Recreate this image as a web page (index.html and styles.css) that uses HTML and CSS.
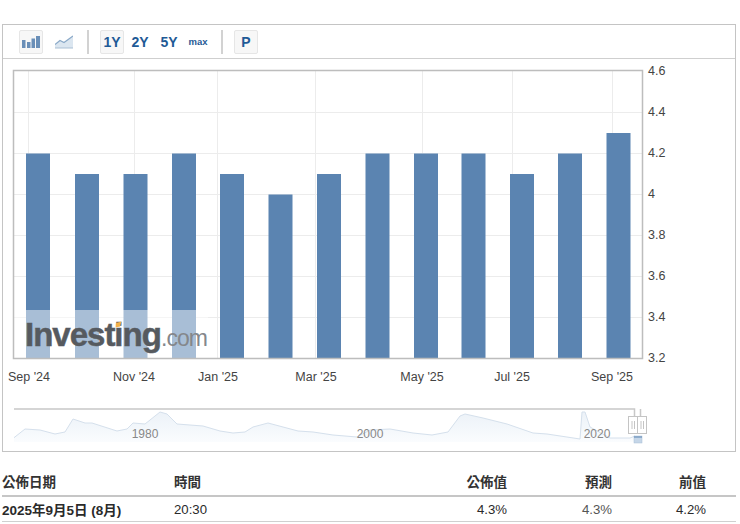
FILE: index.html
```html
<!DOCTYPE html>
<html lang="zh-Hant">
<head>
<meta charset="utf-8">
<title>Investing chart</title>
<link rel="stylesheet" href="styles.css">
</head>
<body>
<section class="panel">
  <div class="toolbar">
    <button class="tool active icon-tool" type="button">
      <svg width="18" height="13" viewBox="0 0 18 13"><path class="bar-icon" d="M0 5h3.500v8H0zM5 7h3.500v6H5zM9.500 3.500H13V13H9.500zM14 1h4v12h-4z"/></svg>
    </button>
    <button class="tool icon-tool" type="button">
      <svg width="18" height="14" viewBox="0 0 18 14"><path class="line-fill" d="M0 9.500 5 5.500 9 7.500 18 1v12H0z"/><path class="line-stroke" d="M0 9.500 5 5.500 9 7.500 18 1"/><path class="line-base" d="M0 13h18"/></svg>
    </button>
    <span class="sep sep-a"></span>
    <button class="tool active" type="button">1Y</button>
    <button class="tool gap-a" type="button">2Y</button>
    <button class="tool gap-b" type="button">5Y</button>
    <button class="tool small gap-c" type="button">max</button>
    <span class="sep sep-b"></span>
    <button class="tool active" type="button">P</button>
  </div>
  <svg class="chart" width="732" height="392" viewBox="3 59 732 392">
    <defs>
      <linearGradient id="nav" x1="0" y1="0" x2="0" y2="1">
        <stop offset="0" stop-color="#ecf2f8"/>
        <stop offset="1" stop-color="#fafcfe"/>
      </linearGradient>
    </defs>
    <g class="grid">
      <path d="M14 112.500H642M14 153.500H642M14 194.500H642M14 235.500H642M14 276.500H642M14 317.500H642"/>
      <path d="M28.500 71V358M134.500 71V358M217.500 71V358M315.500 71V358M422.500 71V358M512.500 71V358M612.500 71V358"/>
    </g>
    <g class="bars">
      <rect x="26" y="153.500" width="24" height="204.500"/>
      <rect x="75" y="174" width="24" height="184"/>
      <rect x="123.500" y="174" width="24" height="184"/>
      <rect x="172" y="153.500" width="24" height="204.500"/>
      <rect x="220" y="174" width="24" height="184"/>
      <rect x="268.500" y="194.500" width="24" height="163.500"/>
      <rect x="317" y="174" width="24" height="184"/>
      <rect x="365.500" y="153.500" width="24" height="204.500"/>
      <rect x="414" y="153.500" width="24" height="204.500"/>
      <rect x="461.500" y="153.500" width="24" height="204.500"/>
      <rect x="510" y="174" width="24" height="184"/>
      <rect x="558" y="153.500" width="24" height="204.500"/>
      <rect x="606.500" y="133" width="24" height="225"/>
    </g>
    <rect class="veil" x="14" y="310" width="194" height="48"/>
    <path class="frame" d="M13.500 358.500V70.500H642.500V358.500Z"/>
    <g class="wm">
      <text class="wm-main" x="25" y="346">Investing</text>
      <text class="wm-com" x="161" y="346">.com</text>
      <path class="wm-dot" d="M116 323l5.500-1.500-1.500 5-4.500 1z"/>
    </g>
    <g class="y-axis">
      <text x="648" y="75">4.6</text>
      <text x="648" y="116">4.4</text>
      <text x="648" y="157">4.2</text>
      <text x="648" y="198">4</text>
      <text x="648" y="239">3.8</text>
      <text x="648" y="280">3.6</text>
      <text x="648" y="321">3.4</text>
      <text x="648" y="362">3.2</text>
    </g>
    <g class="x-axis">
      <text x="29" y="381">Sep '24</text>
      <text x="134" y="381">Nov '24</text>
      <text x="218" y="381">Jan '25</text>
      <text x="316" y="381">Mar '25</text>
      <text x="422" y="381">May '25</text>
      <text x="512" y="381">Jul '25</text>
      <text x="612" y="381">Sep '25</text>
    </g>
    <path class="nav-area" d="M14 437.700 25 429 40 430 55 434 65 432 73 419 85 423 92 423 117 431 127 429 133 423 145 424 160 412 167 414 177 424 203 426 220 431 233 433 245 432 253 427 268 423 283 427 298 431 313 432 333 435 357 437 370 430 390 429 413 433 432 435 448 432 460 416 465 414 483 418 507 424 533 433 547 434 580 439 582 412 585 412 590 427 610 438 630 438 635 436V442H14Z"/>
    <path class="nav-line" d="M14 437.700 25 429 40 430 55 434 65 432 73 419 85 423 92 423 117 431 127 429 133 423 145 424 160 412 167 414 177 424 203 426 220 431 233 433 245 432 253 427 268 423 283 427 298 431 313 432 333 435 357 437 370 430 390 429 413 433 432 435 448 432 460 416 465 414 483 418 507 424 533 433 547 434 580 439 582 412 585 412 590 427 610 438 630 438 635 436"/>
    <g class="nav-labels">
      <text x="145" y="438">1980</text>
      <text x="370" y="438">2000</text>
      <text x="597" y="438">2020</text>
    </g>
    <path class="nav-top" d="M14 409H634.500V417M640.500 409V417"/>
    <rect class="nav-sel" x="634" y="436" width="8" height="7"/>
    <path class="nav-sel-line" d="M634 437H642"/>
    <g class="handles">
      <rect x="628.500" y="416.500" width="9" height="17"/>
      <rect x="637.500" y="416.500" width="9" height="17"/>
      <path d="M632 421V429M634.500 421V429M641 421V429M643.500 421V429"/>
    </g>
  </svg>
</section>
<table class="release">
  <thead>
    <tr><th class="col-date">公佈日期</th><th class="col-time">時間</th><th class="col-num col-actual">公佈值</th><th class="col-num col-fore">預測</th><th class="col-num col-prev">前值</th></tr>
  </thead>
  <tbody>
    <tr><td class="cell-date">2025年9月5日 (8月)</td><td>20:30</td><td class="col-num">4.3%</td><td class="col-num muted">4.3%</td><td class="col-num col-prev">4.2%</td></tr>
  </tbody>
</table>
</body>
</html>
```
FILE: styles.css
```css
html, body { margin: 0; padding: 0; background: #fff; }
body {
  width: 740px;
  height: 524px;
  overflow: hidden;
  padding-top: 24px;
  box-sizing: border-box;
  font-family: "Liberation Sans", "Noto Sans CJK TC", sans-serif;
}
.panel {
  width: 732px;
  margin-left: 2px;
  border: 1px solid #c4c4c4;
  height: 426px;
  background: #fff;
}
.toolbar {
  display: flex;
  align-items: center;
  height: 33px;
  padding-left: 16px;
  border-bottom: 1px solid #cfcfcf;
}
.tool {
  width: 24px;
  height: 24px;
  padding: 0;
  border: 1px solid transparent;
  border-radius: 2px;
  background: transparent;
  color: #1f5a96;
  font: bold 14px "Liberation Sans", sans-serif;
  display: flex;
  align-items: center;
  justify-content: center;
}
.tool.active {
  background: #f7f7f7;
  border-color: #e6e6e6;
}
.icon-tool + .icon-tool { margin-left: 9px; }
.tool.small { font-size: 9.500px; }
.gap-a { margin-left: 4px; }
.gap-b { margin-left: 5px; }
.gap-c { margin-left: 5px; }
.sep {
  width: 2px;
  height: 24px;
  background: #d2d2d2;
}
.sep-a { margin: 0 11px 0 11px; }
.sep-b { margin: 0 11px 0 11px; }
.bar-icon { fill: #6a8fb8; }
.line-fill { fill: #dbe6f0; }
.line-stroke { fill: none; stroke: #8aa9c8; stroke-width: 1.200; }
.line-base { stroke: #a9bfd4; stroke-width: 1; }
.chart { display: block; }
.grid path { fill: none; stroke: #ececec; stroke-width: 1; }
.bars rect { fill: #5b84b1; }
.veil { fill: #fff; fill-opacity: .47; }
.frame { fill: none; stroke: #bdbdbd; stroke-width: 1.500; }
.wm-main {
  font: bold 33px "Liberation Sans", sans-serif;
  letter-spacing: -1px;
  fill: #565a5f;
  stroke: #565a5f;
  stroke-width: .5px;
}
.wm-com {
  font: 23px "Liberation Sans", sans-serif;
  letter-spacing: -1px;
  fill: #84878b;
}
.wm-dot { fill: #f2b14a; }
.y-axis text, .x-axis text {
  font: 12.500px "Liberation Sans", sans-serif;
  fill: #444;
}
.x-axis text { text-anchor: middle; }
.nav-area { fill: url(#nav); }
.nav-line { fill: none; stroke: #d5e0ec; stroke-width: 1; }
.nav-labels text {
  font: 12px "Liberation Sans", sans-serif;
  fill: #888;
  text-anchor: middle;
}
.nav-top { fill: none; stroke: #c8c8c8; stroke-width: 1.500; }
.nav-sel { fill: #c5d6e8; stroke: #a9bfd6; stroke-width: .5; }
.nav-sel-line { stroke: #5b84b1; stroke-width: 1; }
.handles rect { fill: #fff; stroke: #c4c4c4; stroke-width: 1; }
.handles path { stroke: #c4c4c4; stroke-width: 1; fill: none; }
.release {
  width: 734px;
  margin: 18px 0 0 2px;
  border-collapse: collapse;
  table-layout: fixed;
  font-size: 13.200px;
  color: #2a2a2a;
}
.release th {
  height: 26px;
  padding: 0 0 3px;
  box-sizing: border-box;
  text-align: left;
  font-size: 13.500px;
  font-weight: bold;
  color: #333;
  border-bottom: 2px solid #c6c6c6;
}
.release td {
  height: 24px;
  padding: 0;
  border-bottom: 1px solid #d0d0d0;
}
.release .col-date { width: 172px; }
.release .col-time { width: 225px; }
.release .col-actual { width: 108px; }
.release .col-fore { width: 105px; }
.release .col-prev { width: 124px; padding-right: 30px; box-sizing: border-box; }
.release .col-num { text-align: right; }
.release .cell-date { font-size: 13.500px; font-weight: bold; white-space: nowrap; }
.release .muted { color: #555; }
```
